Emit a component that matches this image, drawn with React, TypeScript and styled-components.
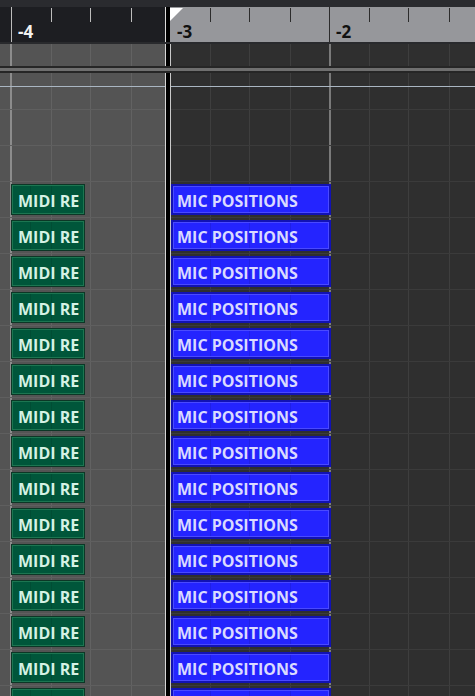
import React from "react";
import styled, { createGlobalStyle } from "styled-components";

const GlobalStyle = createGlobalStyle`
  html, body {
    margin: 0;
    padding: 0;
    background: #2f2f2f;
    overflow: hidden;
  }
  * {
    box-sizing: border-box;
  }
`;

// vertical lines as [x, width, colour], drawn through one gradient
const vlines = (specs: [number, number, string][]) =>
  `linear-gradient(to right, ${specs
    .map(
      ([x, w, c]) =>
        `transparent ${x}px, ${c} ${x}px, ${c} ${x + w}px, transparent ${x + w}px`
    )
    .join(", ")})`;

const LEFT_GRID = vlines([
  [10, 2, "#8c8c8c"],
  [51, 1, "#626262"],
  [90, 1, "#626262"],
  [131, 1, "#626262"],
]);

const RIGHT_GRID = vlines([
  [39, 1, "#3e3e3e"],
  [78, 1, "#3e3e3e"],
  [119, 1, "#3e3e3e"],
  [158, 2, "#7a7a7a"],
  [198, 1, "#3e3e3e"],
  [237, 1, "#3e3e3e"],
  [278, 1, "#3e3e3e"],
]);

const Page = styled.div`
  width: 475px;
  height: 696px;
  overflow: hidden;
  background: #2f2f2f;
  font-family: "Open Sans", "Noto Sans", sans-serif;
`;

const TopStrip = styled.div`
  height: 7px;
  background: #2a2b2f;
`;

const Ruler = styled.div`
  display: flex;
  height: 37px;
  border-bottom: 2px solid #292a2d;
`;

const RulerSide = styled.div<{ $dark?: boolean }>`
  position: relative;
  display: flex;
  overflow: hidden;
  background: ${(p) => (p.$dark ? "#1d1e22" : "#96979b")};
  ${(p) => (p.$dark ? "width: 165px; padding-left: 11px;" : "flex: 1;")}
  ${(p) =>
    !p.$dark &&
    `
    &::before {
      content: "";
      position: absolute;
      top: 1px;
      left: 0;
      border-top: 13px solid #ffffff;
      border-right: 13px solid transparent;
    }
  `}
`;

const RulerCursor = styled.div`
  width: 5px;
  border-left: 1px solid #dcdcdc;
  background: #000;
`;

const Bar = styled.div<{ $tick: string; $major: boolean }>`
  flex-shrink: 0;
  width: 159px;
  height: 100%;
  padding-top: 1px;
  border-left: 1px solid transparent;
  ${(p) =>
    p.$major
      ? `border-image: linear-gradient(to bottom, transparent 1px, ${p.$tick} 1px, ${p.$tick} 35px, transparent 35px) 1;`
      : ""}
  background-image: ${(p) =>
    vlines([
      [39, 1, p.$tick],
      [78, 1, p.$tick],
      [119, 1, p.$tick],
    ])};
  background-size: 100% 14px;
  background-position: 0 1px;
  background-repeat: no-repeat;
  display: flex;
  align-items: flex-end;
`;

const BarLabel = styled.span<{ $light: boolean }>`
  margin: 0 0 0 6px;
  font-size: 17px;
  font-weight: 700;
  line-height: 20px;
  color: ${(p) => (p.$light ? "#f2f2f2" : "#111111")};
`;

const Row = styled.div<{ $h: number }>`
  display: flex;
  height: ${(p) => p.$h}px;
`;

const Cell = styled.div<{ $left?: boolean; $top?: string }>`
  display: flex;
  align-items: flex-start;
  padding-top: 2px;
  background-color: ${(p) => (p.$left ? "#545454" : "#2f2f2f")};
  background-image: ${(p) => (p.$left ? LEFT_GRID : RIGHT_GRID)};
  border-top: ${(p) => (p.$top ? `1px solid ${p.$top}` : "none")};
  ${(p) => (p.$left ? "width: 165px; padding-left: 11px;" : "flex: 1;")}
`;

const Cursor = styled.div`
  width: 6px;
  border-left: 1px solid #d6d6d6;
  border-right: 1px solid #c8c8c8;
  background: #000;
`;

const Divider = styled.div`
  height: 7px;
  border-top: 2px solid #262626;
  border-bottom: 2px solid #262626;
  background: #6f6f6f;
`;

const Clip = styled.div<{ $kind: "midi" | "audio" }>`
  flex-shrink: 0;
  height: 31px;
  display: flex;
  align-items: center;
  padding-top: 2px;
  overflow: hidden;
  white-space: nowrap;
  font-size: 16px;
  font-weight: 700;
  ${(p) =>
    p.$kind === "midi"
      ? `
    width: 74px;
    padding-left: 6px;
    border: 1px solid #0c3726;
    box-shadow: inset 0 0 0 1px #1c7651;
    background-color: #00563a;
    background-image: ${vlines([
      [18, 1, "rgba(0,0,0,0.10)"],
      [39, 1, "rgba(0,0,0,0.10)"],
    ])};
    color: #d5f2e4;
  `
      : `
    width: 160px;
    padding-left: 4px;
    border: 2px solid #1212b4;
    box-shadow: inset 0 0 0 1px #4a4aff;
    background-color: #2424ff;
    background-image: ${vlines([
      [37, 1, "rgba(0,0,60,0.12)"],
      [76, 1, "rgba(0,0,60,0.12)"],
      [117, 1, "rgba(0,0,60,0.12)"],
    ])};
    color: #dadaff;
  `}
`;

const bars = [
  { label: "-3", major: false },
  { label: "-2", major: true },
];

const LEFT_LINE = "#5f5f5f";
const RIGHT_LINE = "#3b3b3b";

const App: React.FC = () => {
  const clipRows = Array.from({ length: 15 }, (_, i) => i);
  return (
    <Page>
      <GlobalStyle />
      <TopStrip />
      <Ruler>
        <RulerSide $dark>
          <Bar $tick="#bdbdbd" $major>
            <BarLabel $light>-4</BarLabel>
          </Bar>
        </RulerSide>
        <RulerCursor />
        <RulerSide>
          {bars.map((b) => (
            <Bar key={b.label} $tick="#2c2c2c" $major={b.major}>
              <BarLabel $light={false}>{b.label}</BarLabel>
            </Bar>
          ))}
        </RulerSide>
      </Ruler>
      <Row $h={22}>
        <Cell $left />
        <Cursor />
        <Cell />
      </Row>
      <Divider />
      <Row $h={13}>
        <Cell $left />
        <Cursor />
        <Cell />
      </Row>
      <Row $h={23}>
        <Cell $left $top="#aab6c2" />
        <Cursor />
        <Cell $top="#aab6c2" />
      </Row>
      {[0, 1].map((i) => (
        <Row key={`e${i}`} $h={36}>
          <Cell $left $top={LEFT_LINE} />
          <Cursor />
          <Cell $top={RIGHT_LINE} />
        </Row>
      ))}
      {clipRows.map((i) => (
        <Row key={i} $h={36}>
          <Cell $left $top={LEFT_LINE}>
            <Clip $kind="midi">MIDI RE</Clip>
          </Cell>
          <Cursor />
          <Cell $top={RIGHT_LINE}>
            <Clip $kind="audio">MIC POSITIONS</Clip>
          </Cell>
        </Row>
      ))}
    </Page>
  );
};

export default App;
